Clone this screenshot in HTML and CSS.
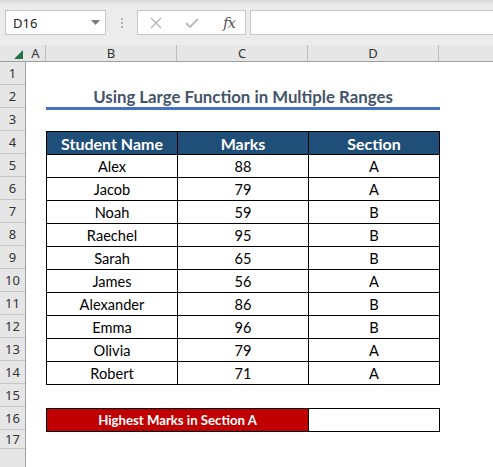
FILE: index.html
```html
<!DOCTYPE html>
<html lang="en">
<head>
  <meta charset="UTF-8" />
  <title>Using Large Function in Multiple Ranges</title>
  <link rel="stylesheet" href="styles.css">
</head>
<body>
  <div class="toolbar">
    <div class="namebox">
      <span>D16</span>
      <svg width="9" height="5" viewBox="0 0 9 5"><polygon points="0,0 9,0 4.5,5" fill="#7b7b7b"/></svg>
    </div>
    <div class="grip"><i></i><i></i><i></i></div>
    <div class="fbtns">
      <svg class="cancel" width="12" height="12" viewBox="0 0 12 12"><path d="M1 1 L11 11 M11 1 L1 11" stroke="#b3b3b3" stroke-width="1.3" fill="none"/></svg>
      <svg class="enter" width="14" height="10" viewBox="0 0 14 10"><path d="M1 5 L5 9 L13 1" stroke="#bdbdbd" stroke-width="2" fill="none"/></svg>
      <span class="fx">fx</span>
    </div>
    <div class="finput"></div>
  </div>

  <div class="colheads">
    <div class="corner"><svg width="9" height="9" viewBox="0 0 9 9"><polygon points="9,0 9,9 0,9" fill="#217346"/></svg></div>
    <div class="ch col-a">A</div>
    <div class="ch col-b">B</div>
    <div class="ch col-c">C</div>
    <div class="ch col-d">D</div>
    <div class="ch col-e"></div>
  </div>

  <div class="sheet">
    <div class="rowheads">
      <div class="rh">1</div>
      <div class="rh">2</div>
      <div class="rh">3</div>
      <div class="rh">4</div>
      <div class="rh">5</div>
      <div class="rh">6</div>
      <div class="rh">7</div>
      <div class="rh">8</div>
      <div class="rh">9</div>
      <div class="rh">10</div>
      <div class="rh">11</div>
      <div class="rh">12</div>
      <div class="rh">13</div>
      <div class="rh">14</div>
      <div class="rh">15</div>
      <div class="rh">16</div>
      <div class="rh short">17</div>
    </div>

    <div class="cells">
      <div class="gap"></div>
      <div class="title">Using Large Function in Multiple Ranges</div>
      <div class="gap after-title"></div>

      <table class="marks">
        <colgroup><col class="w131"><col class="w131"><col></colgroup>
        <tr><th>Student Name</th><th>Marks</th><th>Section</th></tr>
        <tr><td>Alex</td><td>88</td><td>A</td></tr>
        <tr><td>Jacob</td><td>79</td><td>A</td></tr>
        <tr><td>Noah</td><td>59</td><td>B</td></tr>
        <tr><td>Raechel</td><td>95</td><td>B</td></tr>
        <tr><td>Sarah</td><td>65</td><td>B</td></tr>
        <tr><td>James</td><td>56</td><td>A</td></tr>
        <tr><td>Alexander</td><td>86</td><td>B</td></tr>
        <tr><td>Emma</td><td>96</td><td>B</td></tr>
        <tr><td>Olivia</td><td>79</td><td>A</td></tr>
        <tr><td>Robert</td><td>71</td><td>A</td></tr>
      </table>

      <div class="gap"></div>

      <table class="result">
        <colgroup><col class="w262"><col></colgroup>
        <tr><td class="label">Highest Marks in Section A</td><td></td></tr>
      </table>
    </div>
  </div>
</body>
</html>
```

FILE: styles.css
```css
body {
  margin: 0;
  width: 493px;
  height: 467px;
  overflow: hidden;
  background: #fff;
  font-family: Lato, "Liberation Sans", sans-serif;
}

/* formula bar */
.toolbar {
  height: 45px;
  box-sizing: border-box;
  padding-top: 10px;
  display: flex;
  align-items: flex-start;
  background: linear-gradient(#d9d9d9, #ececec 5px);
}
.namebox, .fbtns, .finput {
  height: 25px;
  box-sizing: border-box;
  border: 1px solid #c6c6c6;
  background: #fff;
}
.namebox {
  margin-left: 5px;
  width: 101px;
  display: flex;
  align-items: center;
  justify-content: space-between;
  padding: 0 5px 0 7px;
  font: 13px "Noto Sans", sans-serif;
  color: #222;
}
.grip {
  width: 31px;
  display: flex;
  flex-direction: column;
  align-items: center;
  gap: 2px;
  padding-top: 8px;
}
.grip i {
  width: 2px;
  height: 2px;
  background: #b0b0b0;
}
.fbtns {
  width: 109px;
  display: flex;
  align-items: center;
  padding-left: 12px;
}
.enter { margin-left: 23px; }
.fx {
  margin-left: 24px;
  font: italic 15px "DejaVu Serif", serif;
  color: #555;
  letter-spacing: -1px;
}
.finput {
  flex: 1;
  margin-left: 4px;
  border-right: none;
}

/* column headers */
.colheads {
  height: 17px;
  box-sizing: border-box;
  display: flex;
  background: #e6e6e6;
  border-bottom: 1px solid #9e9e9e;
  font: 13px "Noto Sans", sans-serif;
  color: #333;
}
.corner {
  width: 26px;
  display: flex;
  justify-content: flex-end;
  align-items: flex-end;
  padding: 0 3px 2px 0;
  box-sizing: border-box;
}
.ch {
  box-sizing: border-box;
  border-right: 1px solid #bcbcbc;
  text-align: center;
  line-height: 16px;
}
.col-a { width: 20px; }
.col-b, .col-c, .col-d { width: 131px; }
.col-e { flex: 1; border-right: none; }

/* grid body */
.sheet {
  display: flex;
  height: 405px;
}
.rowheads {
  width: 26px;
  box-sizing: border-box;
  background: #e6e6e6;
  border-right: 1px solid #9e9e9e;
  font: 13px "Noto Sans", sans-serif;
  color: #333;
}
.rh {
  height: 23px;
  box-sizing: border-box;
  border-bottom: 1px solid #c6c6c6;
  text-align: center;
  line-height: 23px;
}
.rh.short {
  height: 19px;
  line-height: 19px;
}
.cells {
  flex: 1;
  padding-left: 20px;
}
.gap { height: 23px; }
.gap.after-title { height: 21px; }

.title {
  width: 394px;
  height: 25px;
  box-sizing: border-box;
  border-bottom: 3px solid #4472c4;
  text-align: center;
  line-height: 23px;
  font-size: 16.8px;
  font-weight: bold;
  color: #44546a;
}

table {
  border-collapse: collapse;
  table-layout: fixed;
  width: 394px;
}
.w131 { width: 131px; }
.w262 { width: 262px; }
td, th {
  border: 1px solid #000;
  padding: 0;
  height: 22px;
  text-align: center;
  font-size: 14.6px;
  color: #000;
}
th {
  background: #1f4e78;
  color: #fff;
  font-size: 16px;
}
.result td.label {
  background: #c00000;
  color: #fff;
  font-weight: bold;
  font-size: 13.2px;
}
```
